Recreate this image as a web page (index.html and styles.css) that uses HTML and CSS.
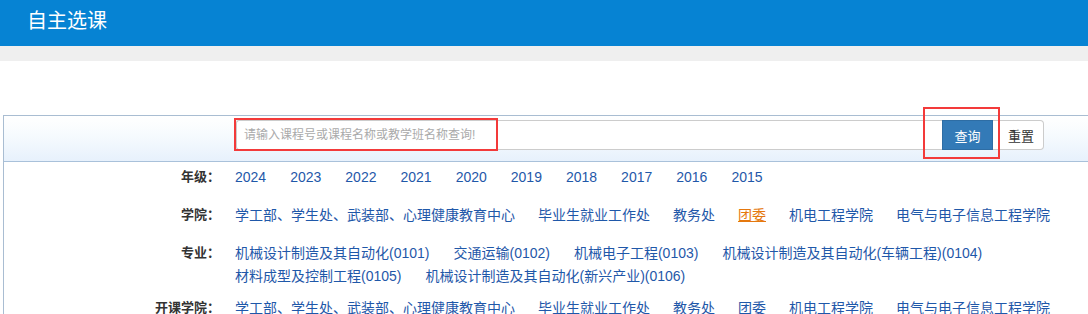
FILE: index.html
```html
<!DOCTYPE html>
<html lang="zh-CN">
<head>
    <meta charset="UTF-8">
    <title>自主选课</title>
    <link rel="stylesheet" href="styles.css">
</head>
<body>
    <div class="header">
        <div class="title">自主选课</div>
    </div>
    <div class="band"></div>

    <div class="panel">
        <div class="search-bar">
            <div class="input-group">
                <input type="text" class="search-input" placeholder="请输入课程号或课程名称或教学班名称查询!">
                <button class="btn btn-primary">查询</button>
                <button class="btn btn-default">重置</button>
            </div>
            <div class="mark mark-input"></div>
            <div class="mark mark-btn"></div>
        </div>

        <div class="filters">
            <div class="filter-row">
                <div class="filter-label">年级：</div>
                <div class="filter-values">
                    <a href="#">2024</a>
                    <a href="#">2023</a>
                    <a href="#">2022</a>
                    <a href="#">2021</a>
                    <a href="#">2020</a>
                    <a href="#">2019</a>
                    <a href="#">2018</a>
                    <a href="#">2017</a>
                    <a href="#">2016</a>
                    <a href="#">2015</a>
                </div>
            </div>
            <div class="filter-row">
                <div class="filter-label">学院：</div>
                <div class="filter-values tight">
                    <a href="#">学工部、学生处、武装部、心理健康教育中心</a>
                    <a href="#">毕业生就业工作处</a>
                    <a href="#">教务处</a>
                    <a href="#" class="active">团委</a>
                    <a href="#">机电工程学院</a>
                    <a href="#">电气与电子信息工程学院</a>
                </div>
            </div>
            <div class="filter-row multi">
                <div class="filter-label">专业：</div>
                <div class="filter-values">
                    <a href="#">机械设计制造及其自动化(0101)</a>
                    <a href="#">交通运输(0102)</a>
                    <a href="#">机械电子工程(0103)</a>
                    <a href="#">机械设计制造及其自动化(车辆工程)(0104)</a>
                    <a href="#">材料成型及控制工程(0105)</a>
                    <a href="#">机械设计制造及其自动化(新兴产业)(0106)</a>
                </div>
            </div>
            <div class="filter-row">
                <div class="filter-label">开课学院：</div>
                <div class="filter-values tight">
                    <a href="#">学工部、学生处、武装部、心理健康教育中心</a>
                    <a href="#">毕业生就业工作处</a>
                    <a href="#">教务处</a>
                    <a href="#">团委</a>
                    <a href="#">机电工程学院</a>
                    <a href="#">电气与电子信息工程学院</a>
                </div>
            </div>
        </div>
    </div>
</body>
</html>
```

FILE: styles.css
```css
body {
    font-family: "Liberation Sans", "Noto Sans CJK SC", sans-serif;
    margin: 0;
    padding: 0;
    background-color: #fff;
    overflow: hidden;
}
.header {
    height: 46px;
    background-color: #0683d3;
}
.title {
    padding-left: 27px;
    line-height: 43px;
    font-size: 20px;
    color: #fff;
}
.band {
    height: 15px;
    background-color: #efefef;
}
.panel {
    margin: 54px -40px 0 3px;
    border: 1px solid #a9bdd2;
}
.search-bar {
    position: relative;
    height: 46px;
    padding: 4px 0 0 232px;
    box-sizing: border-box;
    border-bottom: 1px solid #a9c1da;
    background: linear-gradient(to bottom, #ffffff 0%, #f7fbfe 40%, #e7f1fc 100%);
}
.input-group {
    display: flex;
    height: 30px;
}
.search-input {
    width: 706px;
    height: 30px;
    box-sizing: border-box;
    padding: 0 7px;
    border: 1px solid #ccc;
    border-right: none;
    border-radius: 3px 0 0 3px;
    font-family: inherit;
    font-size: 12px;
    color: #333;
    outline: none;
}
.search-input::placeholder {
    color: #aaa;
}
.btn {
    width: 51px;
    height: 30px;
    padding: 0;
    font-family: inherit;
    font-size: 13px;
    cursor: pointer;
}
.btn-primary {
    background-color: #337ab7;
    border: 1px solid #2e6da4;
    color: #fff;
}
.btn-default {
    padding-left: 6px;
    background-color: #fff;
    border: 1px solid #ccc;
    border-left: none;
    border-radius: 0 4px 4px 0;
    color: #333;
}
/* red annotation boxes drawn over the screenshot */
.mark {
    position: absolute;
    border: 2px solid #f33a3a;
}
.mark-input {
    left: 230px;
    top: 2px;
    width: 260px;
    height: 29px;
}
.mark-btn {
    left: 919px;
    top: -9px;
    width: 73px;
    height: 48px;
}
.filters {
    padding-top: 4px;
}
.filter-row {
    display: flex;
    margin-bottom: 16px;
    line-height: 22px;
}
.filter-row.multi {
    margin-bottom: 10px;
}
.filter-label {
    width: 216px;
    flex-shrink: 0;
    text-align: right;
    font-size: 13px;
    font-weight: bold;
    color: #333;
}
.filter-values {
    display: flex;
    flex-wrap: wrap;
    column-gap: 24px;
    row-gap: 1px;
    margin-left: 15px;
    width: 840px;
    font-size: 14px;
}
.filter-values.tight {
    column-gap: 23px;
}
.filter-values a {
    color: #1f58a9;
    text-decoration: none;
}
.filter-values a.active {
    color: #e5780e;
    text-decoration: underline;
}
```
